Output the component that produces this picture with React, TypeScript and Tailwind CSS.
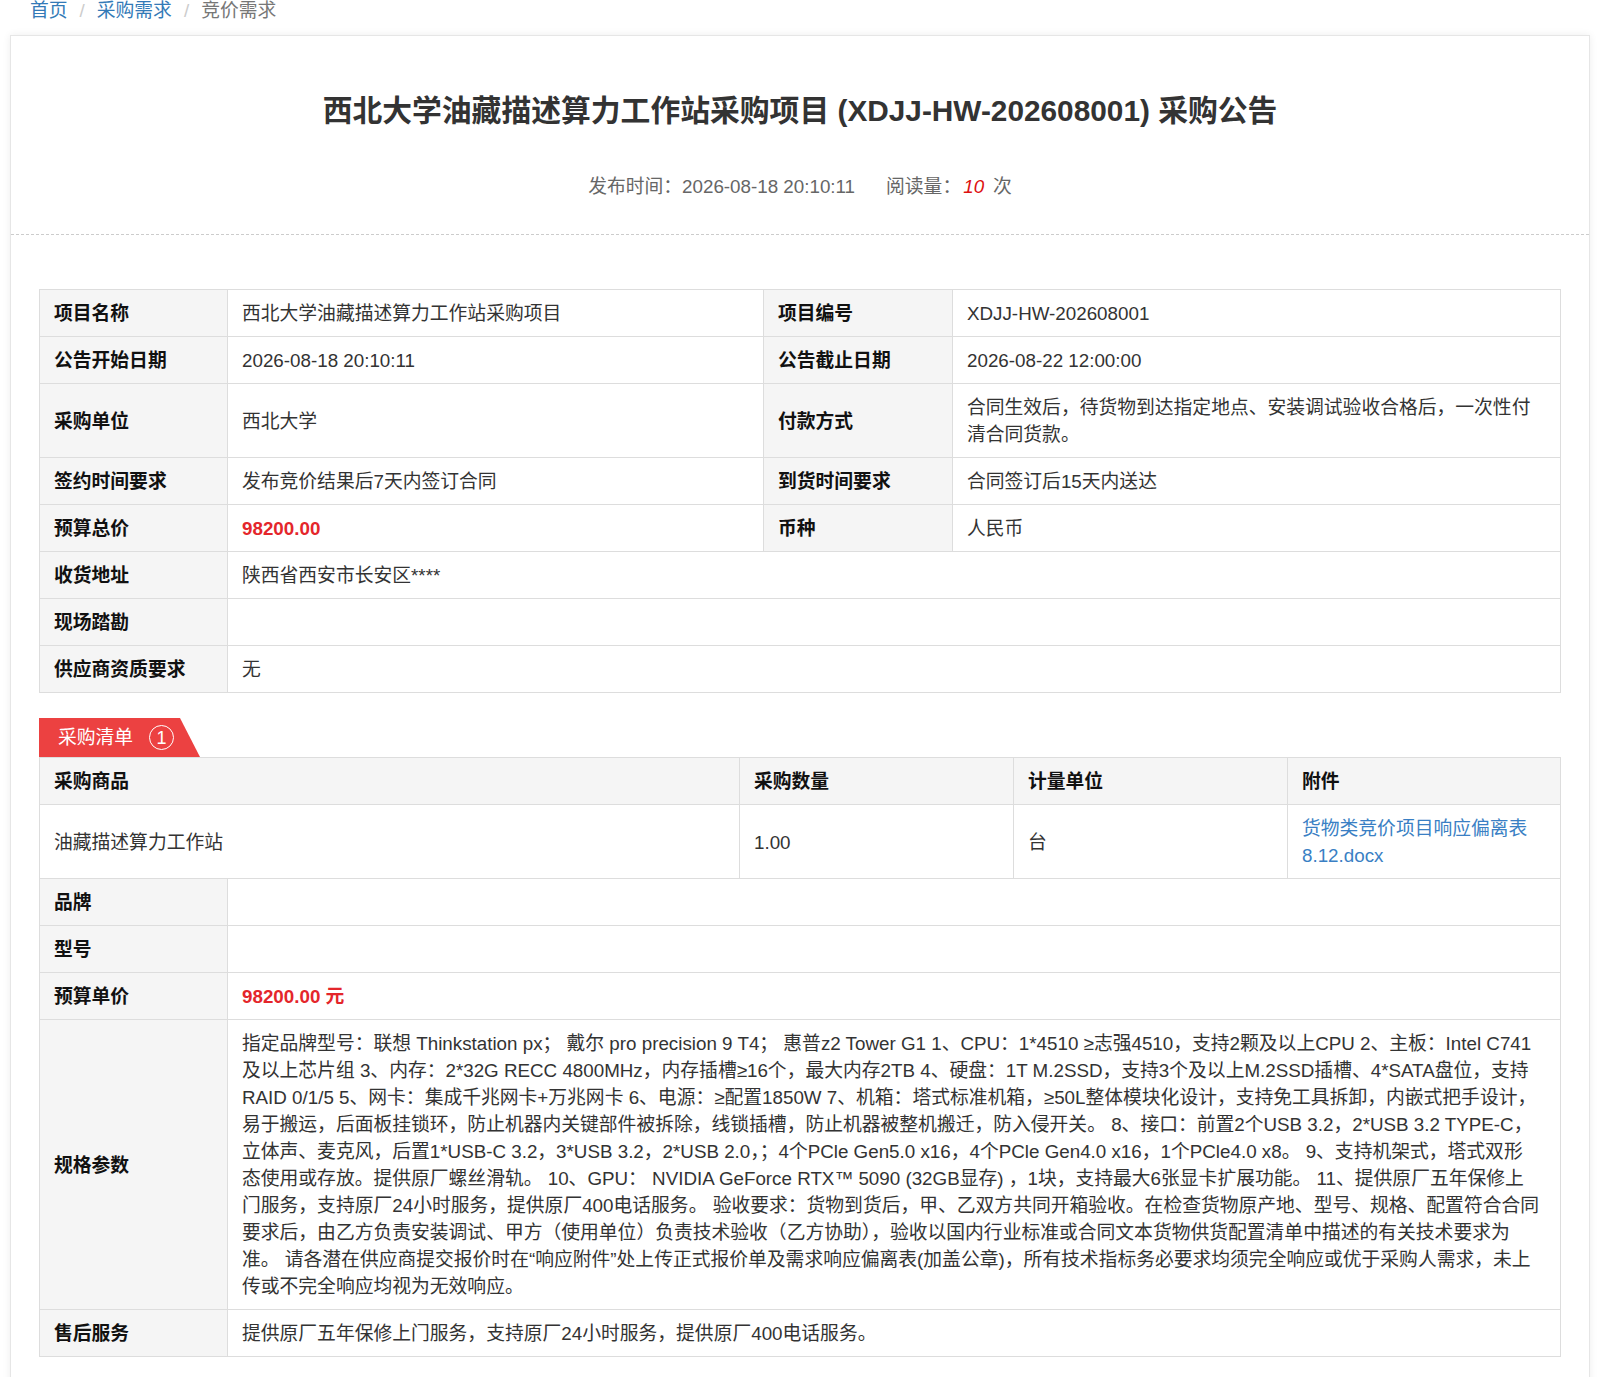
import React from "react";

const TH =
  "border border-[#dddddd] bg-[#f5f5f5] px-[14px] pt-[10px] pb-[9px] text-left font-bold text-[#111111] align-middle";
const TD =
  "border border-[#dddddd] px-[14px] pt-[10px] pb-[9px] text-left font-normal text-[#333333] align-middle";

const SPEC_LINES = [
  "指定品牌型号：联想 Thinkstation px； 戴尔 pro precision 9 T4； 惠普z2 Tower G1 1、CPU：1*4510 ≥志强4510，支持2颗及以上CPU 2、主板：Intel C741",
  "及以上芯片组 3、内存：2*32G RECC 4800MHz，内存插槽≥16个，最大内存2TB 4、硬盘：1T M.2SSD，支持3个及以上M.2SSD插槽、4*SATA盘位，支持",
  "RAID 0/1/5 5、网卡：集成千兆网卡+万兆网卡 6、电源：≥配置1850W 7、机箱：塔式标准机箱，≥50L整体模块化设计，支持免工具拆卸，内嵌式把手设计，",
  "易于搬运，后面板挂锁环，防止机器内关键部件被拆除，线锁插槽，防止机器被整机搬迁，防入侵开关。 8、接口：前置2个USB 3.2，2*USB 3.2 TYPE-C，",
  "立体声、麦克风，后置1*USB-C 3.2，3*USB 3.2，2*USB 2.0，；4个PCle Gen5.0 x16，4个PCle Gen4.0 x16，1个PCle4.0 x8。 9、支持机架式，塔式双形",
  "态使用或存放。提供原厂螺丝滑轨。 10、GPU： NVIDIA GeForce RTX™ 5090 (32GB显存) ，1块，支持最大6张显卡扩展功能。 11、提供原厂五年保修上",
  "门服务，支持原厂24小时服务，提供原厂400电话服务。 验收要求：货物到货后，甲、乙双方共同开箱验收。在检查货物原产地、型号、规格、配置符合合同",
  "要求后，由乙方负责安装调试、甲方（使用单位）负责技术验收（乙方协助），验收以国内行业标准或合同文本货物供货配置清单中描述的有关技术要求为",
  "准。 请各潜在供应商提交报价时在“响应附件”处上传正式报价单及需求响应偏离表(加盖公章)，所有技术指标务必要求均须完全响应或优于采购人需求，未上",
  "传或不完全响应均视为无效响应。",
];

export default function App() {
  return (
    <div className="min-h-screen bg-white font-['Liberation_Sans','Noto_Sans_CJK_SC',sans-serif] text-[18.8px] leading-[27px] text-[#333333]">
      {/* breadcrumb */}
      <div className="-mt-[3px] flex h-[27px] items-center pl-[30px] leading-[27px] mb-[11px]">
        <a className="text-[#337ab7]">首页</a>
        <span className="mx-[12px] text-[#cccccc]">/</span>
        <a className="text-[#337ab7]">采购需求</a>
        <span className="mx-[12px] text-[#cccccc]">/</span>
        <span className="text-[#777777]">竞价需求</span>
      </div>

      {/* card */}
      <div className="ml-[10px] w-[1580px] border border-[#e6e6e6] bg-white shadow-[0_0_8px_rgba(0,0,0,0.07)]">
        <div className="border-b border-dashed border-[#cccccc] pt-[55px] pb-[34px] text-center">
          <h1 className="text-[29.8px] font-bold leading-[40px] text-[#333333]">
            西北大学油藏描述算力工作站采购项目 (XDJJ-HW-202608001) 采购公告
          </h1>
          <div className="mt-[42px] flex justify-center text-[#666666]">
            <span>发布时间：2026-08-18 20:10:11</span>
            <span className="ml-[31px]">
              阅读量：<span className="ml-[2px] mr-[9px] italic text-[#dd1111]">10</span>次
            </span>
          </div>
        </div>

        <div className="px-[28px] pt-[54px] pb-[40px]">
          {/* info table */}
          <table className="w-full table-fixed border-collapse">
            <colgroup>
              <col className="w-[188px]" />
              <col className="w-[536px]" />
              <col className="w-[189px]" />
              <col />
            </colgroup>
            <tbody>
              <tr>
                <th className={TH}>项目名称</th>
                <td className={TD}>西北大学油藏描述算力工作站采购项目</td>
                <th className={TH}>项目编号</th>
                <td className={TD}>XDJJ-HW-202608001</td>
              </tr>
              <tr>
                <th className={TH}>公告开始日期</th>
                <td className={TD}>2026-08-18 20:10:11</td>
                <th className={TH}>公告截止日期</th>
                <td className={TD}>2026-08-22 12:00:00</td>
              </tr>
              <tr>
                <th className={TH}>采购单位</th>
                <td className={TD}>西北大学</td>
                <th className={TH}>付款方式</th>
                <td className={TD}>
                  合同生效后，待货物到达指定地点、安装调试验收合格后，一次性付清合同货款。
                </td>
              </tr>
              <tr>
                <th className={TH}>签约时间要求</th>
                <td className={TD}>发布竞价结果后7天内签订合同</td>
                <th className={TH}>到货时间要求</th>
                <td className={TD}>合同签订后15天内送达</td>
              </tr>
              <tr>
                <th className={TH}>预算总价</th>
                <td className={TD}>
                  <span className="font-bold text-[#e4262b]">98200.00</span>
                </td>
                <th className={TH}>币种</th>
                <td className={TD}>人民币</td>
              </tr>
              <tr>
                <th className={TH}>收货地址</th>
                <td className={TD} colSpan={3}>
                  陕西省西安市长安区****
                </td>
              </tr>
              <tr>
                <th className={TH}>现场踏勘</th>
                <td className={TD} colSpan={3}>
                  &nbsp;
                </td>
              </tr>
              <tr>
                <th className={TH}>供应商资质要求</th>
                <td className={TD} colSpan={3}>
                  无
                </td>
              </tr>
            </tbody>
          </table>

          {/* tab */}
          <div className="mt-[25px] flex h-[39px] w-[161px] items-center bg-[#ec4141] pl-[19px] text-white [clip-path:polygon(0_0,141px_0,100%_100%,0_100%)]">
            <span>采购清单</span>
            <span className="ml-[16px] flex h-[25px] w-[25px] items-center justify-center rounded-full border-[1.5px] border-white text-[18px] leading-none">
              1
            </span>
          </div>

          {/* list table */}
          <table className="w-full table-fixed border-collapse">
            <colgroup>
              <col className="w-[188px]" />
              <col className="w-[512px]" />
              <col className="w-[274px]" />
              <col className="w-[274px]" />
              <col />
            </colgroup>
            <tbody>
              <tr>
                <th className={TH} colSpan={2}>
                  采购商品
                </th>
                <th className={TH}>采购数量</th>
                <th className={TH}>计量单位</th>
                <th className={TH}>附件</th>
              </tr>
              <tr>
                <td className={TD} colSpan={2}>
                  油藏描述算力工作站
                </td>
                <td className={TD}>1.00</td>
                <td className={TD}>台</td>
                <td className={TD}>
                  <a className="text-[#3a7fc4]">货物类竞价项目响应偏离表8.12.docx</a>
                </td>
              </tr>
              <tr>
                <th className={TH}>品牌</th>
                <td className={TD} colSpan={4}>
                  &nbsp;
                </td>
              </tr>
              <tr>
                <th className={TH}>型号</th>
                <td className={TD} colSpan={4}>
                  &nbsp;
                </td>
              </tr>
              <tr>
                <th className={TH}>预算单价</th>
                <td className={TD} colSpan={4}>
                  <span className="font-bold text-[#e4262b]">98200.00 元</span>
                </td>
              </tr>
              <tr>
                <th className={TH}>规格参数</th>
                <td className={TD} colSpan={4}>
                  {SPEC_LINES.map((line, i) => (
                    <React.Fragment key={i}>
                      {line}
                      {i < SPEC_LINES.length - 1 && <br />}
                    </React.Fragment>
                  ))}
                </td>
              </tr>
              <tr>
                <th className={TH}>售后服务</th>
                <td className={TD} colSpan={4}>
                  提供原厂五年保修上门服务，支持原厂24小时服务，提供原厂400电话服务。
                </td>
              </tr>
            </tbody>
          </table>
        </div>
      </div>
    </div>
  );
}
